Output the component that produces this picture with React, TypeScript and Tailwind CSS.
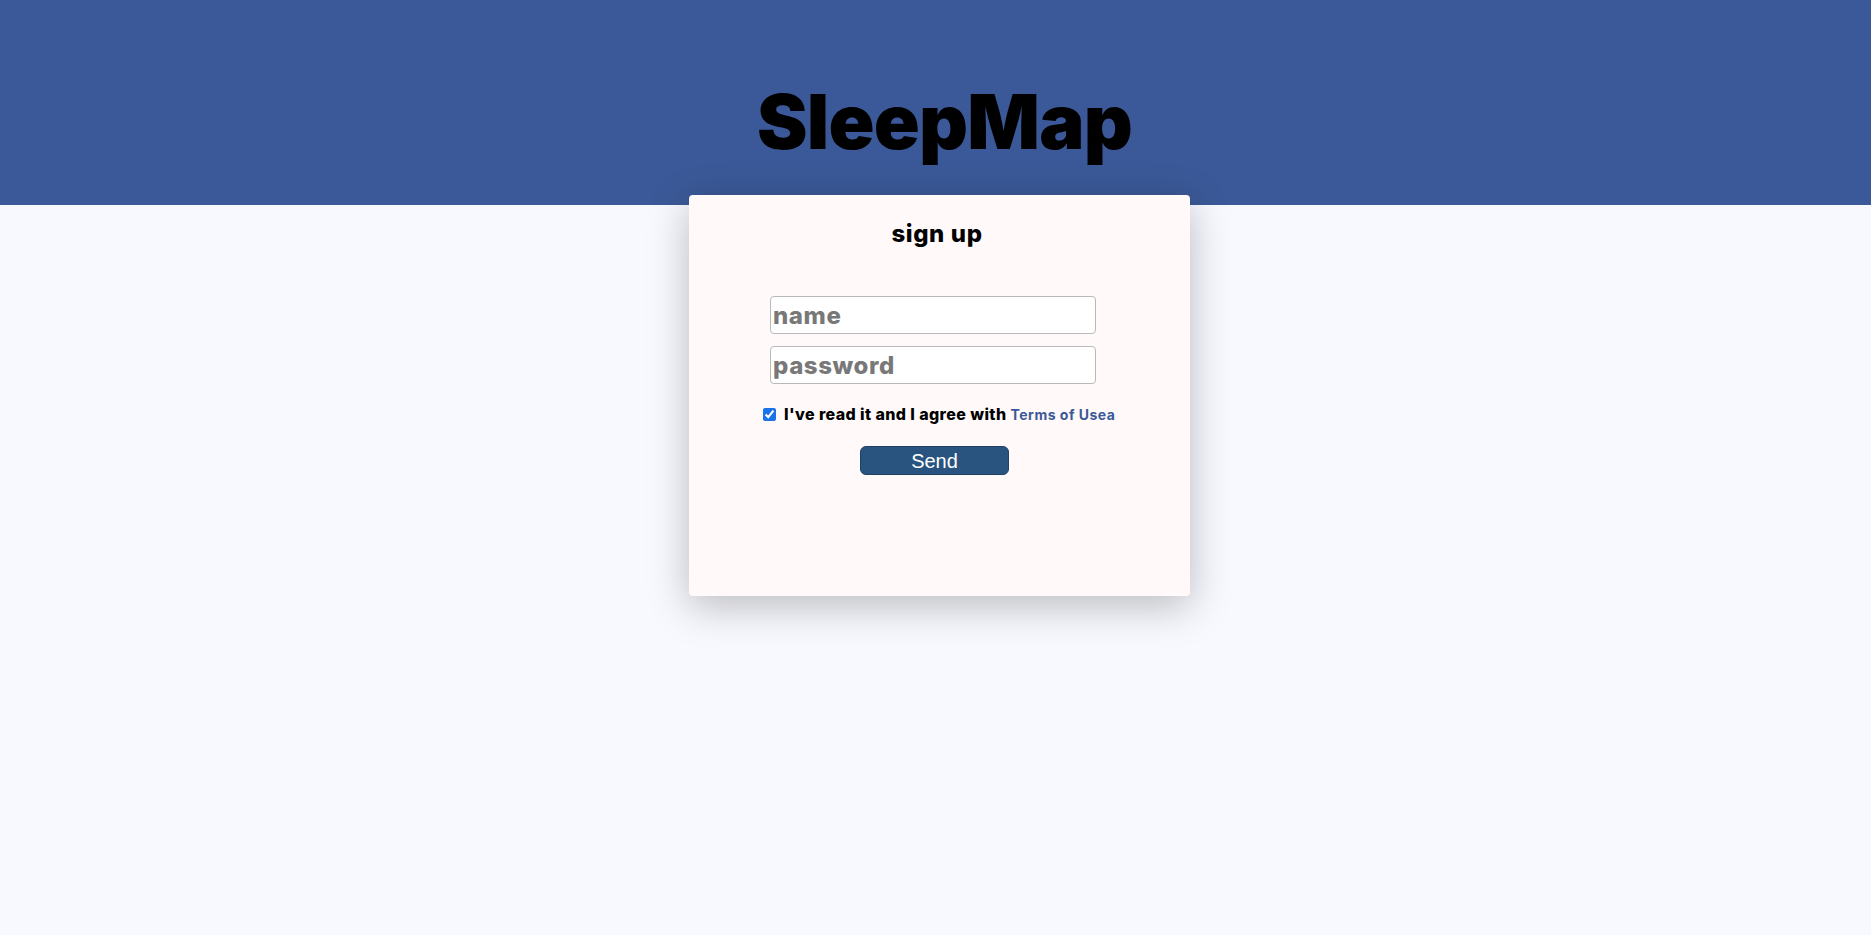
import { useState } from 'react'

const SignUpCard = () => {
  const [agreed, setAgreed] = useState(true)

  return (
    <div className="w-[501px] h-[401px] bg-[#fffaf9] rounded-[4px] shadow-[0_10px_40px_rgba(0,0,0,0.25)] flex flex-col">
      <h2 className="mt-[21px] text-center text-[24px] leading-[36px] font-extrabold text-black tracking-[0.6px] pr-[5px]">
        sign up
      </h2>

      <form className="flex flex-col mt-[44px]" onSubmit={(e) => e.preventDefault()}>
        <div className="flex flex-col gap-[12px] ml-[81px] w-[326px]">
          <input
            type="text"
            placeholder="name"
            className="h-[38px] w-full bg-white border border-[#b9b9b9] rounded-[4px] px-[2px] text-[24px] font-extrabold tracking-[0.6px] placeholder:text-[#787878] outline-none"
          />
          <input
            type="password"
            placeholder="password"
            className="h-[38px] w-full bg-white border border-[#b9b9b9] rounded-[4px] px-[2px] text-[24px] font-extrabold tracking-[0.6px] placeholder:text-[#787878] outline-none"
          />
        </div>

        <label className="flex items-center mt-[18px] ml-[74px] text-[16px] font-extrabold text-black whitespace-nowrap tracking-[0.4px]">
          <input
            type="checkbox"
            checked={agreed}
            onChange={() => setAgreed(!agreed)}
            className="w-[13px] h-[13px] mr-[8px] accent-[#1a73e8]"
          />
          <span>I've read it and I agree with</span>
          <a href="#" className="ml-[4px] text-[14px] font-bold text-[#3b5998] tracking-[0.5px]">
            Terms of Usea
          </a>
        </label>

        <button
          type="submit"
          className="mt-[20px] ml-[171px] w-[149px] h-[29px] bg-[#28547f] border border-[#1f4163] rounded-[6px] text-white text-[20px] leading-none font-['Liberation_Sans',Arial,sans-serif]"
        >
          Send
        </button>
      </form>
    </div>
  )
}

const App = () => {
  return (
    <div className="min-h-[935px] bg-[#f8f9fe] font-['Inter','Noto_Sans',sans-serif]">
      <header className="h-[205px] bg-[#3b5998] flex justify-center pl-[18px]">
        <h1 className="mt-[78px] text-[76px] leading-[86px] font-black text-black tracking-[-0.8px]">
          SleepMap
        </h1>
      </header>

      <div className="flex justify-center pl-[8px] -mt-[10px]">
        <SignUpCard />
      </div>
    </div>
  )
}

export default App
